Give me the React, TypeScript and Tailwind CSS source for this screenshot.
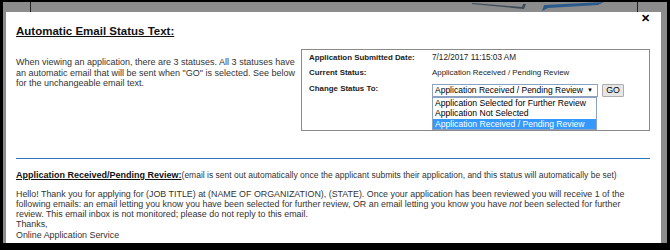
import React from 'react';

const font = { fontFamily: '"Liberation Sans", Arial, sans-serif' };

function TopStrip() {
  return (
    <div className="relative h-[10px] shrink-0">
      <div className="absolute left-[24px] top-0 h-[10px] w-[1px] bg-[#222]" />
      <svg className="absolute left-[466px] top-0" width="132" height="10" viewBox="0 0 132 10">
        <path d="M0 1 L50 5 L51 2 L54 2 L52 7 L0 2 Z" fill="#3d4a58" />
        <path d="M70 9 L72 3 L132 0 L126 3 L76 6 Z" fill="#2a5a8c" />
      </svg>
      <div className="absolute left-[631px] top-0 h-[10px] w-[1px] bg-[#222]" />
    </div>
  );
}

function StatusBox() {
  return (
    <div className="relative ml-auto h-[82px] w-[349px] border border-[#8a8a8a] pl-[7px] pt-[2px] text-[7.9px] leading-[11px] text-[#222]">
      <div className="flex h-[15px]">
        <div className="w-[123px] font-bold">Application Submitted Date:</div>
        <div className="text-[8.2px]">7/12/2017 11:15:03 AM</div>
      </div>
      <div className="flex h-[16px]">
        <div className="w-[123px] font-bold">Current Status:</div>
        <div>Application Received / Pending Review</div>
      </div>
      <div className="flex">
        <div className="w-[123px] font-bold">Change Status To:</div>
        <div className="relative mt-[1px] flex gap-[4px]">
          <div className="flex h-[13px] w-[166px] items-center justify-between whitespace-nowrap border border-[#8da2c0] pl-[2px] pr-[4px] text-[8.5px] text-black">
            <span>Application Received / Pending Review</span>
            <span className="text-[6px]">▼</span>
          </div>
          <div className="flex h-[13px] w-[22px] items-center justify-center rounded-[1px] border border-[#adadad] bg-[#e6e6e6] text-[8.8px] text-black">
            GO
          </div>
          <div className="absolute left-0 top-[13px] w-[165px] whitespace-nowrap border border-[#8da2c0] bg-white text-[8.6px] leading-[10.3px] text-black">
            <div className="pl-[2px]">Application Selected for Further Review</div>
            <div className="pl-[2px]">Application Not Selected</div>
            <div className="bg-[#3399ff] pl-[2px] text-white">Application Received / Pending Review</div>
          </div>
        </div>
      </div>
    </div>
  );
}

export default function App() {
  return (
    <div className="flex h-[250px] w-[670px] flex-col bg-black pb-[7px] pl-[3px] pr-[3px] pt-[2px]" style={font}>
      <div className="flex flex-1 flex-col bg-[#8c8c8c] pl-[3px] pr-[6px]">
        <TopStrip />
        <div className="flex-1 bg-white pl-[10px] pr-[11px] text-[#333]">
          <div className="flex items-start justify-between">
            <h1 className="pt-[13px] text-[11.5px] font-bold leading-[13px] text-[#111] underline">
              Automatic Email Status Text:
            </h1>
            <span className="pt-[1px] text-[11px] font-bold leading-[11px] text-black">✕</span>
          </div>
          <div className="mt-[11px] flex">
            <p className="mt-[8px] w-[285px] text-[9px] leading-[10.5px]">
              When viewing an application, there are 3 statuses. All 3 statuses have an automatic email that will be sent when "GO" is selected. See below for the unchangeable email text.
            </p>
            <StatusBox />
          </div>
          <div className="mt-[27px] h-[1px] bg-[#2e75b6]" />
          <p className="mt-[11px] whitespace-nowrap text-[8.5px] leading-[10.5px]">
            <span className="text-[9px] font-bold text-[#111] underline">Application Received/Pending Review:</span>
            (email is sent out automatically once the applicant submits their application, and this status will automatically be set)
          </p>
          <div className="mt-[8px] whitespace-nowrap text-[8.9px] leading-[10.3px]">
            <div>Hello! Thank you for applying for (JOB TITLE) at (NAME OF ORGANIZATION), (STATE). Once your application has been reviewed you will receive 1 of the</div>
            <div>
              following emails: an email letting you know you have been selected for further review, OR an email letting you know you have <i>not</i> been selected for further
            </div>
            <div>review. This email inbox is not monitored; please do not reply to this email.</div>
            <div>Thanks,</div>
            <div>Online Application Service</div>
          </div>
        </div>
      </div>
    </div>
  );
}
